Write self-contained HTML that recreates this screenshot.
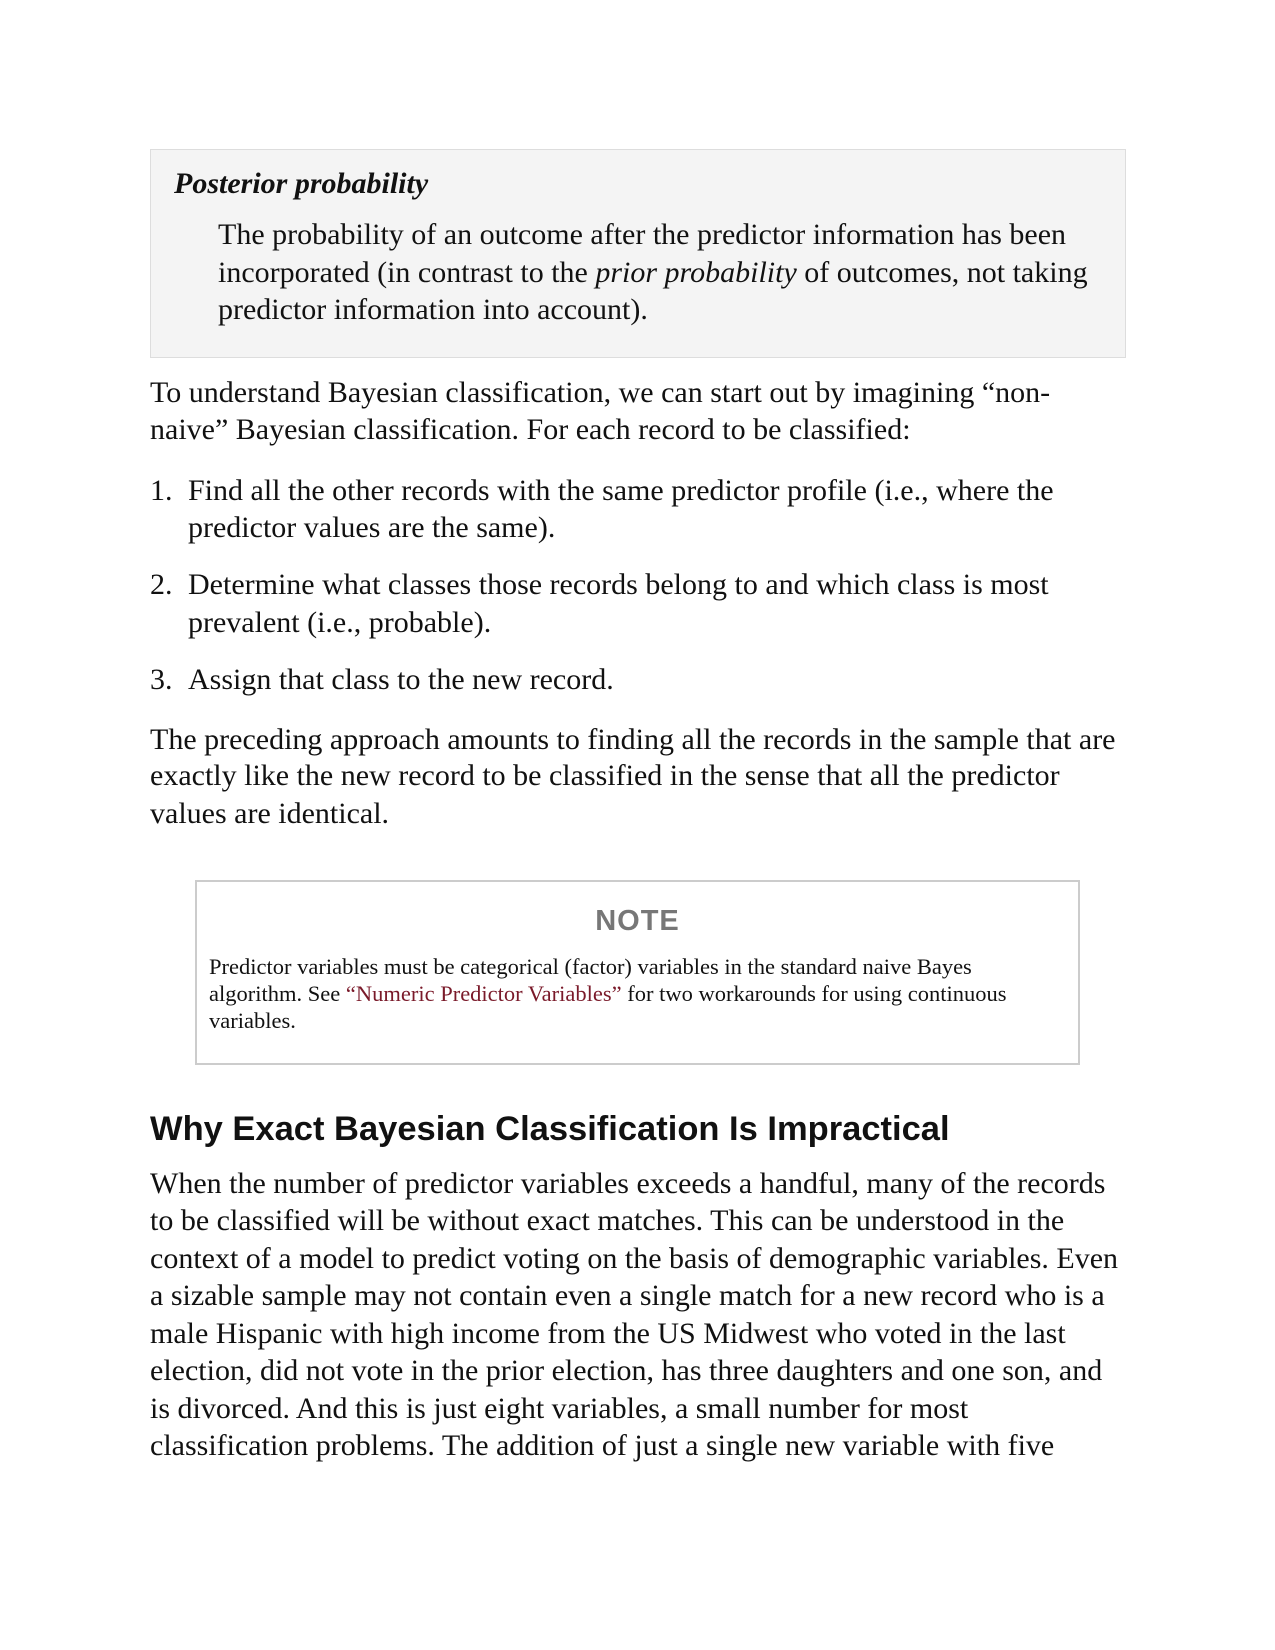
<!DOCTYPE html>
<html><head><meta charset="utf-8"><style>
body{margin:0;width:1275px;height:1650px;background:#fff;position:relative;font-family:"Liberation Serif",serif;color:#111;}
.l{position:absolute;white-space:nowrap;font-size:30px;line-height:37px;height:37px;}
.box{position:absolute;left:150px;top:149px;width:974px;height:207px;background:#f4f4f4;border:1px solid #ddd;}
.note{position:absolute;left:195px;top:880px;width:881px;height:181px;border:2px solid #ccc;}
.n{position:absolute;white-space:nowrap;font-size:22.5px;line-height:27px;left:209px;}
a{color:#7a1a2a;text-decoration:none}
</style></head><body>
<div class="box"></div>
<div class="l" style="left:174px;top:165px;font-style:italic;font-weight:bold;font-size:30px">Posterior probability</div>
<div class="l" style="left:218px;top:216px">The probability of an outcome after the predictor information has been</div>
<div class="l" style="left:218px;top:254px">incorporated (in contrast to the <i>prior probability</i> of outcomes, not taking</div>
<div class="l" style="left:218px;top:291px">predictor information into account).</div>

<div class="l" style="left:150px;top:374px">To understand Bayesian classification, we can start out by imagining “non-</div>
<div class="l" style="left:150px;top:411px">naive” Bayesian classification. For each record to be classified:</div>

<div class="l" style="left:150px;top:472px">1.</div>
<div class="l" style="left:188px;top:472px">Find all the other records with the same predictor profile (i.e., where the</div>
<div class="l" style="left:188px;top:509px">predictor values are the same).</div>
<div class="l" style="left:150px;top:566px">2.</div>
<div class="l" style="left:188px;top:566px">Determine what classes those records belong to and which class is most</div>
<div class="l" style="left:188px;top:604px">prevalent (i.e., probable).</div>
<div class="l" style="left:150px;top:661px">3.</div>
<div class="l" style="left:188px;top:661px">Assign that class to the new record.</div>

<div class="l" style="left:150px;top:721px">The preceding approach amounts to finding all the records in the sample that are</div>
<div class="l" style="left:150px;top:757px">exactly like the new record to be classified in the sense that all the predictor</div>
<div class="l" style="left:150px;top:795px">values are identical.</div>

<div class="note"></div>
<div style="position:absolute;left:195px;width:885px;top:904px;text-align:center;font-family:'Liberation Sans',sans-serif;font-weight:bold;font-size:29px;line-height:34px;color:#777;letter-spacing:1px">NOTE</div>
<div class="n" style="top:953px">Predictor variables must be categorical (factor) variables in the standard naive Bayes</div>
<div class="n" style="top:980px">algorithm. See <a>“Numeric Predictor Variables”</a> for two workarounds for using continuous</div>
<div class="n" style="top:1007px">variables.</div>

<div style="position:absolute;left:150px;top:1108px;font-family:'Liberation Sans',sans-serif;font-weight:bold;font-size:34.5px;line-height:42px;white-space:nowrap">Why Exact Bayesian Classification Is Impractical</div>

<div class="l" style="left:150px;top:1165px">When the number of predictor variables exceeds a handful, many of the records</div>
<div class="l" style="left:150px;top:1202px">to be classified will be without exact matches. This can be understood in the</div>
<div class="l" style="left:150px;top:1240px">context of a model to predict voting on the basis of demographic variables. Even</div>
<div class="l" style="left:150px;top:1277px">a sizable sample may not contain even a single match for a new record who is a</div>
<div class="l" style="left:150px;top:1315px">male Hispanic with high income from the US Midwest who voted in the last</div>
<div class="l" style="left:150px;top:1352px">election, did not vote in the prior election, has three daughters and one son, and</div>
<div class="l" style="left:150px;top:1390px">is divorced. And this is just eight variables, a small number for most</div>
<div class="l" style="left:150px;top:1427px">classification problems. The addition of just a single new variable with five</div>
</body></html>
